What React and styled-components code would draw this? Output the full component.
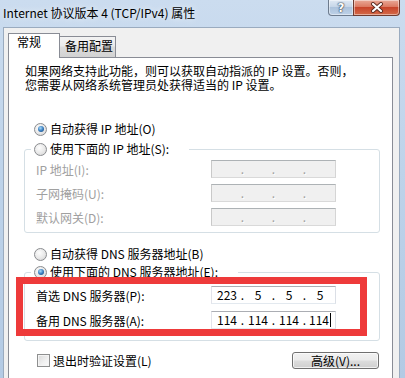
import React from "react";
import styled, { createGlobalStyle } from "styled-components";

const GlobalStyle = createGlobalStyle`
  html, body {
    margin: 0;
    padding: 0;
  }
  body {
    width: 405px;
    height: 378px;
    overflow: hidden;
    font-family: "Noto Sans CJK SC", "Noto Sans", sans-serif;
    font-size: 12px;
    color: #000;
  }
`;

const Window = styled.div`
  width: 405px;
  height: 378px;
  display: flex;
  flex-direction: column;
  overflow: hidden;
  background: linear-gradient(180deg, #cbdcef 0%, #bed3ea 45%, #b3cae4 100%);
`;

const TitleBar = styled.div`
  flex: none;
  height: 27px;
  display: flex;
  justify-content: space-between;
  align-items: flex-start;
  padding: 0 5px 0 3px;
`;

const Title = styled.div`
  margin-top: 6px;
  line-height: 14px;
  font-size: 12px;
  text-shadow: 0 0 6px rgba(255, 255, 255, 0.9);
`;

const Controls = styled.div`
  display: flex;
`;

const CaptionButton = styled.div`
  height: 16px;
  box-sizing: border-box;
  display: flex;
  align-items: center;
  justify-content: center;
  border: 1px solid ${(p) => (p.$close ? "#6e3b30" : "#6d7b8d")};
  border-top: none;
  width: ${(p) => (p.$close ? "47px" : "26px")};
  border-radius: ${(p) => (p.$close ? "0 0 4px 0" : "0 0 0 4px")};
  background: ${(p) =>
    p.$close
      ? "linear-gradient(180deg, #e9a998 0%, #dc7a62 45%, #c8452b 50%, #d36a48 100%)"
      : "linear-gradient(180deg, #e0e9f4 0%, #c6d6e8 45%, #adc3dc 50%, #bdd1e7 100%)"};
  box-shadow: inset 0 0 0 1px rgba(255, 255, 255, 0.45);
  ${(p) => p.$close && "margin-left: -1px;"}
`;

const HelpGlyph = styled.span`
  font-family: "DejaVu Sans", sans-serif;
  font-weight: bold;
  font-size: 12px;
  line-height: 12px;
  color: #fff;
  text-shadow: 0 0 1px #3a4656, 0 0 1px #3a4656, 0 0 2px #3a4656;
`;

const Body = styled.div`
  flex: 1;
  display: flex;
  flex-direction: column;
  margin: 0 5px 0 3px;
  padding: 5px 6px 0 4px;
  background: #f0f0f0;
  border: 1px solid #9aabbf;
  border-bottom: none;
`;

const TabStrip = styled.div`
  display: flex;
  align-items: flex-end;
  height: 24px;
`;

const Tab = styled.div`
  position: relative;
  box-sizing: border-box;
  border: 1px solid #898c95;
  line-height: 14px;
  ${(p) =>
    p.$active
      ? `
    width: 52px;
    height: 25px;
    margin-bottom: -1px;
    z-index: 1;
    border-bottom: none;
    background: #fff;
    padding: 1px 0 0 8px;
  `
      : `
    width: 56px;
    height: 21px;
    border-left: none;
    border-bottom: none;
    padding: 2px 0 0 5px;
    background: linear-gradient(180deg, #f3f3f3 0%, #ebebeb 45%, #dcdcdc 50%, #d2d2d2 100%);
  `}
`;

const Panel = styled.div`
  flex: 1;
  display: flex;
  flex-direction: column;
  background: #fff;
  border: 1px solid #898c95;
  border-bottom: none;
`;

const Description = styled.p`
  margin: 6px 0 0 16px;
  line-height: 14px;
`;

const RadioRow = styled.div`
  display: flex;
  align-items: center;
  gap: 3px;
  height: 16px;
  line-height: 16px;
  margin: ${(p) => p.$margin || "0"};
`;

const Radio = styled.span`
  width: 13px;
  height: 13px;
  box-sizing: border-box;
  border-radius: 50%;
  border: 1px solid #8a8c8f;
  background: radial-gradient(circle at 40% 35%, #fdfdfd 0%, #e8e8e8 55%, #cfcfcf 100%);
  display: flex;
  align-items: center;
  justify-content: center;
  &::after {
    content: "";
    display: ${(p) => (p.$checked ? "block" : "none")};
    width: 6px;
    height: 6px;
    border-radius: 50%;
    background: radial-gradient(circle at 40% 35%, #a9dcfa 0%, #3b7fc1 50%, #153f6e 100%);
  }
`;

const GroupWrap = styled.div`
  position: relative;
  margin: ${(p) => p.$margin};
`;

const Group = styled.fieldset`
  margin: 0;
  padding: ${(p) => p.$padding};
  min-width: 0;
  border: 1px solid #d5dfe5;
  border-radius: 3px;
`;

const Legend = styled.legend`
  margin-left: 6px;
  padding: 0 20px 0 3px;
  background: #fff;
`;

const Rows = styled.div`
  display: flex;
  flex-direction: column;
  gap: ${(p) => p.$gap};
  padding-left: 11px;
`;

const FieldRow = styled.div`
  display: flex;
  align-items: center;
  height: 18px;
`;

const FieldLabel = styled.span`
  width: 175px;
  color: ${(p) => (p.$disabled ? "#a0a0a0" : "#000")};
`;

const IpBox = styled.div`
  width: 125px;
  height: 18px;
  box-sizing: border-box;
  display: flex;
  align-items: center;
  padding: 0 2px;
  border: 1px solid;
  border-color: ${(p) =>
    p.$disabled ? "#adb2b5 #d5d5d5 #d9d9d9 #c9c9c9" : "#abadb3 #dbdfe6 #e3e9ef #e2e3ea"};
  background: ${(p) => (p.$disabled ? "#f0f0f0" : "#fff")};
  color: ${(p) => (p.$disabled ? "#a0a0a0" : "#000")};
  line-height: 16px;
`;

const Segment = styled.span`
  width: 26px;
  display: flex;
  justify-content: center;
  align-items: center;
`;

const Dot = styled.span`
  width: 5px;
  text-align: center;
  ${(p) => p.$disabled && "text-shadow: 1px 1px 0 #fff;"}
`;

const Caret = styled.span`
  display: inline-block;
  width: 1px;
  height: 14px;
  margin-left: 1px;
  background: #000;
`;

const RedMark = styled.div`
  position: absolute;
  left: -8px;
  top: 13px;
  width: 351px;
  height: 59px;
  box-sizing: border-box;
  border: 7px solid #ee3a3a;
  pointer-events: none;
`;

const BottomRow = styled.div`
  display: flex;
  justify-content: space-between;
  align-items: center;
  height: 17px;
  margin-top: 11px;
  padding: 0 13px 0 28px;
`;

const CheckRow = styled.div`
  display: flex;
  align-items: center;
  gap: 3px;
`;

const CheckBox = styled.span`
  width: 13px;
  height: 13px;
  box-sizing: border-box;
  border: 1px solid #8e8f8f;
  background: linear-gradient(135deg, #d9d9d9 0%, #f1f1f1 60%, #fafafa 100%);
  box-shadow: inset 0 0 0 1px #f4f4f4;
`;

const Button = styled.div`
  width: 87px;
  height: 17px;
  box-sizing: border-box;
  border: 1px solid #707070;
  border-radius: 3px;
  display: flex;
  align-items: center;
  justify-content: center;
  line-height: 15px;
  background: linear-gradient(180deg, #f2f2f2 0%, #ebebeb 48%, #dddddd 52%, #cfcfcf 100%);
  box-shadow: inset 0 0 0 1px rgba(255, 255, 255, 0.7);
`;

const IpValue = ({ parts, disabled, caret }) => (
  <IpBox $disabled={disabled}>
    {parts.map((part, i) => (
      <React.Fragment key={i}>
        {i > 0 && <Dot $disabled={disabled}>.</Dot>}
        <Segment>
          {part}
          {caret && i === parts.length - 1 && <Caret />}
        </Segment>
      </React.Fragment>
    ))}
  </IpBox>
);

const CloseGlyph = () => (
  <svg width="14" height="11" viewBox="0 0 14 11">
    <path d="M3 2 L11 9 M11 2 L3 9" stroke="#5a2a20" strokeWidth="4" strokeLinecap="round" />
    <path d="M3 2 L11 9 M11 2 L3 9" stroke="#fff" strokeWidth="2.2" strokeLinecap="round" />
  </svg>
);

const App = () => {
  return (
    <Window>
      <GlobalStyle />
      <TitleBar>
        <Title>Internet 协议版本 4 (TCP/IPv4) 属性</Title>
        <Controls>
          <CaptionButton>
            <HelpGlyph>?</HelpGlyph>
          </CaptionButton>
          <CaptionButton $close>
            <CloseGlyph />
          </CaptionButton>
        </Controls>
      </TitleBar>
      <Body>
        <TabStrip>
          <Tab $active>常规</Tab>
          <Tab>备用配置</Tab>
        </TabStrip>
        <Panel>
          <Description>
            如果网络支持此功能，则可以获取自动指派的 IP 设置。否则，
            <br />
            您需要从网络系统管理员处获得适当的 IP 设置。
          </Description>

          <RadioRow $margin="29px 0 0 25px">
            <Radio $checked />
            自动获得 IP 地址(O)
          </RadioRow>

          <GroupWrap $margin="4px 12px 0 15px">
            <Group $padding="3px 0 6px 0">
              <Legend>
                <RadioRow>
                  <Radio />
                  使用下面的 IP 地址(S):
                </RadioRow>
              </Legend>
              <Rows $gap="6px">
                <FieldRow>
                  <FieldLabel $disabled>IP 地址(I):</FieldLabel>
                  <IpValue parts={["", "", "", ""]} disabled />
                </FieldRow>
                <FieldRow>
                  <FieldLabel $disabled>子网掩码(U):</FieldLabel>
                  <IpValue parts={["", "", "", ""]} disabled />
                </FieldRow>
                <FieldRow>
                  <FieldLabel $disabled>默认网关(D):</FieldLabel>
                  <IpValue parts={["", "", "", ""]} disabled />
                </FieldRow>
              </Rows>
            </Group>
          </GroupWrap>

          <RadioRow $margin="13px 0 0 25px">
            <Radio />
            自动获得 DNS 服务器地址(B)
          </RadioRow>

          <GroupWrap $margin="2px 12px 0 15px">
            <Group $padding="6px 0 11px 0">
              <Legend>
                <RadioRow>
                  <Radio $checked />
                  使用下面的 DNS 服务器地址(E):
                </RadioRow>
              </Legend>
              <Rows $gap="7px">
                <FieldRow>
                  <FieldLabel>首选 DNS 服务器(P):</FieldLabel>
                  <IpValue parts={["223", "5", "5", "5"]} />
                </FieldRow>
                <FieldRow>
                  <FieldLabel>备用 DNS 服务器(A):</FieldLabel>
                  <IpValue parts={["114", "114", "114", "114"]} caret />
                </FieldRow>
              </Rows>
            </Group>
            <RedMark />
          </GroupWrap>

          <BottomRow>
            <CheckRow>
              <CheckBox />
              退出时验证设置(L)
            </CheckRow>
            <Button>高级(V)...</Button>
          </BottomRow>
        </Panel>
      </Body>
    </Window>
  );
};

export default App;
